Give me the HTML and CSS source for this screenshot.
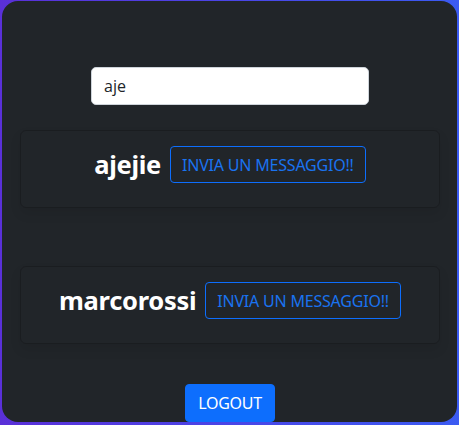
FILE: index.html
```html
<!DOCTYPE html>
<html lang="it">
<head>
<meta charset="utf-8">
<title>Utenti</title>
<link rel="stylesheet" href="styles.css">
</head>
<body>
<div class="panel">
  <div class="search">
    <input class="search-input" type="text" value="aje" autofocus>
  </div>
  <div class="user-card first">
    <div class="user-row">
      <h3 class="user-name">ajejie</h3>
      <button class="btn-outline">INVIA UN MESSAGGIO!!</button>
    </div>
  </div>
  <div class="user-card second">
    <div class="user-row">
      <h3 class="user-name">marcorossi</h3>
      <button class="btn-outline">INVIA UN MESSAGGIO!!</button>
    </div>
  </div>
  <div class="logout-wrap">
    <button class="btn-primary">LOGOUT</button>
  </div>
</div>
</body>
</html>
```

FILE: styles.css
```css
html, body {
  margin: 0;
  padding: 0;
  height: 425px;
  overflow: hidden;
}
body {
  background: linear-gradient(90deg, #5a30d8 0%, #4a45e6 50%, #3b5bf2 100%);
  font-family: "Noto Sans", "Open Sans", sans-serif;
  padding: 1px 2px 0 2px;
  box-sizing: border-box;
}
.panel {
  background: #212529;
  height: 421px;
  border-radius: 16px;
  box-sizing: border-box;
  padding: 66px 17px 0 18px;
  display: flex;
  flex-direction: column;
  overflow: hidden;
}
.search {
  display: flex;
  justify-content: center;
}
.search-input {
  width: 278px;
  height: 38px;
  box-sizing: border-box;
  border: 1px solid #ced4da;
  border-radius: 5px;
  padding: 0 12px;
  font-family: "Open Sans", "Noto Sans", sans-serif;
  font-size: 16px;
  color: #212529;
  caret-color: #212529;
  background: #fff;
  outline: none;
}
.user-card {
  border: 1px solid rgba(0, 0, 0, 0.2);
  border-radius: 6px;
  box-shadow: 0 6px 12px rgba(0, 0, 0, 0.08);
  height: 79px;
  box-sizing: border-box;
  padding: 15px 16px 0 16px;
}
.user-card.first { margin-top: 25px; }
.user-card.second { margin-top: 58px; }
.user-row {
  display: flex;
  justify-content: center;
  align-items: center;
  gap: 9px;
}
.user-name {
  margin: 0;
  color: #fff;
  font-size: 25.5px;
  font-weight: 700;
  letter-spacing: -0.3px;
  line-height: 1;
}
.btn-outline {
  height: 37px;
  box-sizing: border-box;
  border: 1px solid #0d6efd;
  border-radius: 4px;
  background: transparent;
  color: #1a73f0;
  font-family: "Noto Sans", sans-serif;
  font-size: 16px;
  letter-spacing: -0.2px;
  padding: 0 11px;
}
.logout-wrap {
  display: flex;
  justify-content: center;
  margin-top: 40px;
}
.btn-primary {
  width: 90px;
  height: 38px;
  border: 1px solid #0d6efd;
  border-radius: 4px;
  background: #0d6efd;
  color: #fff;
  font-family: "Noto Sans", sans-serif;
  font-size: 16px;
  letter-spacing: -0.3px;
  padding: 0;
}
```
